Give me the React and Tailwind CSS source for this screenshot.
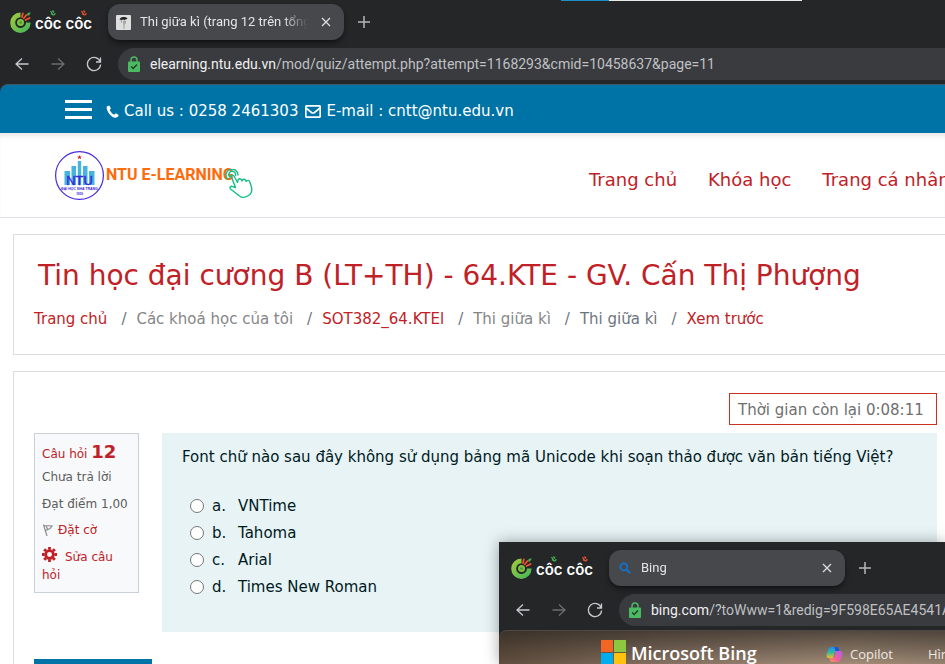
import React from "react";

function CocCocLogo() {
  return (
    <div className="flex h-full w-[85px] shrink-0 items-center gap-1">
      <svg viewBox="0 0 21 21" className="h-[21px] w-[21px] shrink-0" aria-hidden="true">
        <defs>
          <linearGradient id="ccg" x1="0" y1="0" x2="1" y2="1">
            <stop offset="0" stopColor="#a9cc3a" />
            <stop offset="1" stopColor="#3bb45c" />
          </linearGradient>
        </defs>
        <path d="M10.500 0.500 A10.200 10.200 0 1 0 20.600 10.500 H16 A5.400 5.400 0 1 1 10.500 5.200 Z" fill="url(#ccg)" />
        <circle cx="10.500" cy="10.600" r="3.500" fill="#7cc243" />
        <circle cx="10.500" cy="10.600" r="1.400" fill="#4f9440" />
        <path d="M12 5 L12.800 1.500 M13.800 6.200 L16.400 3 M15.600 8 L19.600 6" stroke="#f0512f" strokeWidth="1.800" strokeLinecap="round" />
        <path d="M17 3.500 L17.800 0.800 L20.800 0.600 L19 3.400 Z" fill="#45b654" />
      </svg>
      <span className="relative mt-1 whitespace-nowrap font-['Inter',sans-serif] text-[15px] font-semibold leading-5 text-white">
        côc côc
        <svg viewBox="0 0 60 8" className="absolute left-0 -top-1 h-2 w-[60px]" fill="none" strokeWidth="1.300" aria-hidden="true">
          <path d="M15.500 1 L17.500 4 M17.500 0.500 L19 2.500 M16 3.500 Q20 6.500 20 3" stroke="#45b654" />
          <path d="M46.500 1 L48.500 4 M48.500 0.500 L50 2.500 M47 3.500 Q51 6.500 51 3" stroke="#f0512f" />
        </svg>
      </span>
    </div>
  );
}

function ToolIcon({ label, dim, children }) {
  return (
    <button aria-label={label} className={dim ? "flex h-8 w-9 items-center justify-center text-[#6c6d6f]" : "flex h-8 w-9 items-center justify-center text-[#c8c9cb]"}>
      <svg viewBox="0 0 16 16" className="h-4 w-4" fill="none" stroke="currentColor" strokeWidth="1.300" aria-hidden="true">
        {children}
      </svg>
    </button>
  );
}

function BrowserChrome({ id, title, favicon, host, path }) {
  return (
    <header className="bg-[#242628] font-['Segoe_UI','Roboto','Noto_Sans',sans-serif]">
      <div className="flex h-11 items-center pl-[10px]">
        <CocCocLogo />
        <div className="ml-[13px] flex h-9 w-[236px] items-center rounded-xl bg-[#47484c] pl-2 pr-3 shadow-md shadow-black/40">
          <span className="flex w-6 shrink-0">{favicon}</span>
          <span className="flex-1 overflow-hidden whitespace-nowrap text-[13px] leading-5 text-[#e3e4e6] [mask-image:linear-gradient(to_right,black_85%,transparent)]">
            {title}
          </span>
          <button aria-label="Close tab" className="ml-3 text-[#dcdddf]">
            <svg viewBox="0 0 12 12" className="h-3 w-3" stroke="currentColor" strokeWidth="1.300" aria-hidden="true">
              <path d="M2 2 L10 10 M10 2 L2 10" />
            </svg>
          </button>
        </div>
        <button aria-label="New tab" className="ml-[14px] text-[#b5b6b8]">
          <svg viewBox="0 0 12 12" className="h-3 w-3" stroke="currentColor" strokeWidth="1.500" aria-hidden="true">
            <path d="M6 0 V12 M0 6 H12" />
          </svg>
        </button>
      </div>
      <div className="flex h-10 items-center pl-1">
        <ToolIcon label="Back"><path d="M14.500 8 H2 M8 2.500 L2 8 L8 13.500" /></ToolIcon>
        <ToolIcon label="Forward" dim><path d="M1.500 8 H14 M8 2.500 L14 8 L8 13.500" /></ToolIcon>
        <ToolIcon label="Reload"><path d="M14.300 6 A6.600 6.600 0 1 0 14.600 8.500 M14.500 1.500 V6 H10" /></ToolIcon>
        <div className="ml-[6px] flex h-8 min-w-0 flex-1 items-center rounded-l-full bg-[#3a3b3f] pl-[10px] text-sm leading-5">
          <svg viewBox="0 0 12 16" className="mr-[10px] h-4 w-3 shrink-0" aria-hidden="true">
            <path d="M3 7 V4 A3 3 0 0 1 9 4 V7" fill="none" stroke="#4cb963" strokeWidth="1.400" />
            <rect y="5.500" width="12" height="10.500" rx="1" fill="#4cb963" />
            <path d="M3.200 10.500 L5.200 12.600 L9 8.600" fill="none" stroke="#1f3d2a" strokeWidth="1.400" />
          </svg>
          <label htmlFor={id} className="shrink-0 text-[#eeeff1]">{host}</label>
          <input id={id} type="text" defaultValue={path} className="min-w-0 flex-1 bg-transparent text-[#bfc0c3] outline-none" />
        </div>
      </div>
    </header>
  );
}

function ContactBar() {
  return (
    <div className="flex h-[49px] items-center rounded-tl-lg border-t border-[#3f5a69] bg-[#0073a6] pl-[65px] text-[15px] leading-5 text-white">
      <button aria-label="Menu" className="flex w-[27px] flex-col gap-[5px]">
        <span className="h-[3px] bg-white" />
        <span className="h-[3px] bg-white" />
        <span className="h-[3px] bg-white" />
      </button>
      <div className="ml-[14px] flex items-center gap-[5px] whitespace-nowrap pt-1">
        <svg viewBox="0 0 13 13" className="h-[13px] w-[13px]" fill="#fff" aria-hidden="true">
          <path d="M3.300 0.400 L0.800 1.400 C-0.200 4.500 4 11.800 8.800 12.800 C10.500 13 12.500 11.800 12.700 10 L9.700 8.300 L8.200 9.700 C6.500 9 4.300 6.500 3.700 4.900 L4.900 3.500 Z" />
        </svg>
        <span>Call us : 0258 2461303</span>
        <svg viewBox="0 0 16 13" className="ml-[2px] h-[13px] w-4" fill="none" stroke="#fff" strokeWidth="1.700" aria-hidden="true">
          <rect x="0.800" y="0.800" width="14.400" height="11.400" rx="1" />
          <path d="M1 3 L7 8 H9 L15 3" />
        </svg>
        <span>E-mail : cntt@ntu.edu.vn</span>
      </div>
    </div>
  );
}

function NtuLogo() {
  return (
    <a href="#home" className="flex w-[534px] shrink-0 items-center">
      <svg viewBox="0 0 49 49" className="h-[49px] w-[49px]" aria-hidden="true">
        <circle cx="24.500" cy="24.500" r="23.900" fill="#fff" stroke="#4a2be0" strokeWidth="1.200" />
        <path d="M24.500 4 L25.200 5.500 L27 5.500 L25.600 6.600 L26.200 8.200 L24.500 7.200 L22.800 8.200 L23.400 6.600 L22 5.500 L23.800 5.500 Z" fill="#e0242a" />
        <path d="M9.500 20 H15 V34 H9.500Z M16.500 15 H21 V34 H16.500Z M22.800 10 H26.200 V34 H22.800Z M28 15 H32.500 V34 H28Z M34 20 H39.500 V34 H34Z" fill="#45b5e0" />
        <text x="24.500" y="34" textAnchor="middle" fontFamily="Liberation Sans, sans-serif" fontSize="13" stroke="#3c22dd" strokeWidth="0.300" fill="#3c22dd">NTU</text>
        <text x="24.500" y="39" textAnchor="middle" fontFamily="Liberation Sans, sans-serif" fontWeight="bold" fontSize="3.500" fill="#3c22dd">ĐẠI HỌC NHA TRANG</text>
        <text x="24.500" y="43.500" textAnchor="middle" fontFamily="Liberation Sans, sans-serif" fontWeight="bold" fontSize="3" fill="#3c22dd">1959</text>
      </svg>
      <span className="ml-[2px] whitespace-nowrap font-['Liberation_Sans_Narrow','Roboto',sans-serif] text-[16px] font-bold leading-6 text-[#ff6a0a]">
        NTU E-LEARNING
      </span>
      <svg viewBox="0 0 28 30" className="-ml-[9px] mt-[18px] h-[30px] w-7" fill="none" stroke="#16bd86" strokeWidth="1.400" strokeLinecap="round" strokeLinejoin="round" aria-hidden="true">
        <path d="M2.500 10 A6 6 0 1 1 13 6 M4.800 8 A3.400 3.400 0 1 1 10.500 6.500" />
        <path d="M6 7 Q7 5.200 9 7 L12.500 13.500 L13 11 Q14.500 9 16.500 10.500 L17 12 Q18.500 9 20.500 11 L21.200 12.500 Q23.500 10 24.800 13 L26.600 18.500 Q27.500 24 23.500 26.500 Q18 30 14.500 27 L5.500 20 Q4 17.500 7 17.300 L10.500 18.500 Z" />
      </svg>
    </a>
  );
}

function SiteHeader() {
  return (
    <div className="flex h-[85px] items-center overflow-hidden border-b border-[#dee2e6] bg-white pl-[55px] shadow-[inset_0_6px_6px_-4px_rgba(0,0,0,0.12)]">
      <NtuLogo />
      <nav className="flex gap-[31px] whitespace-nowrap pt-[10px] text-lg leading-6 text-[#c02126]">
        <a href="#home">Trang chủ</a>
        <a href="#courses">Khóa học</a>
        <a href="#me">Trang cá nhân</a>
      </nav>
    </div>
  );
}

const crumbs = [
  { text: "Trang chủ", href: "#home" },
  { text: "Các khoá học của tôi" },
  { text: "SOT382_64.KTEl", href: "#course" },
  { text: "Thi giữa kì" },
  { text: "Thi giữa kì", dark: true },
  { text: "Xem trước", href: "#preview" },
];

function CourseHeading() {
  return (
    <section className="ml-[13px] mt-4 h-[121px] border border-r-0 border-[#dcdcdc] bg-white pl-5 pt-[21px]">
      <h1 className="whitespace-nowrap pl-1 text-[28px] leading-10 text-[#c02126]">
        Tin học đại cương B (LT+TH) - 64.KTE - GV. Cấn Thị Phượng
      </h1>
      <ol className="mt-[11px] flex whitespace-nowrap text-[15px] leading-6 text-[#868686]">
        {crumbs.map((c, i) => (
          <li key={i} className="flex">
            {i > 0 && <span className="pl-[14px] pr-[10px] text-[#6c757d]">/</span>}
            {c.href ? (
              <a href={c.href} className="text-[#c02126]">{c.text}</a>
            ) : (
              <span className={c.dark ? "text-[#6c757d]" : ""}>{c.text}</span>
            )}
          </li>
        ))}
      </ol>
    </section>
  );
}

const answers = ["VNTime", "Tahoma", "Arial", "Times New Roman"];

function Quiz() {
  return (
    <section className="ml-[13px] mt-4 border border-r-0 border-[#dcdcdc] bg-white pl-5 pr-2 pt-[21px]">
      <div className="flex justify-end">
        <div className="w-52 whitespace-nowrap border border-[#ca3120] px-2 pb-[2px] pt-1 text-[15px] leading-6 text-[#6f6f6f]">
          Thời gian còn lại 0:08:11
        </div>
      </div>
      <div className="mt-2 flex items-start gap-[23px]">
        <aside className="h-40 w-[105px] shrink-0 border border-[#cad0d7] bg-[#f8f9fa] px-[7px] pt-[7px] text-xs leading-[18px] text-[#5c5c5c]">
          <h2 className="whitespace-nowrap leading-[22px] text-[#c02126]">
            Câu hỏi <strong className="text-lg leading-[22px]">12</strong>
          </h2>
          <p className="mt-[3px] whitespace-nowrap">Chưa trả lời</p>
          <p className="mt-[9px] whitespace-nowrap">Đạt điểm 1,00</p>
          <a href="#flag" className="mt-2 flex items-center gap-1 text-[#c02126]">
            <svg viewBox="0 0 12 14" className="h-[14px] w-3" fill="none" stroke="#8a8a8a" strokeWidth="1.200" aria-hidden="true">
              <path d="M1.500 1.500 L5 13 M2 2.500 L10 3 L8 5.500 L3.500 7.500 M4 2.500 L5.500 6" />
            </svg>
            Đặt cờ
          </a>
          <a href="#edit" className="mt-2 block w-20 text-[#c02126]">
            <svg viewBox="0 0 14 14" className="mr-2 inline h-[15px] w-[15px] align-[-1px]" aria-hidden="true">
              <circle cx="7" cy="7" r="3.600" fill="none" stroke="#c02126" strokeWidth="2.600" />
              <path d="M7 0 V2.500 M7 11.500 V14 M0 7 H2.500 M11.500 7 H14 M2 2 L3.800 3.800 M10.200 10.200 L12 12 M12 2 L10.200 3.800 M3.800 10.200 L2 12" stroke="#c02126" strokeWidth="2.600" />
            </svg>
            Sửa câu hỏi
          </a>
        </aside>
        <fieldset className="h-[199px] min-w-0 flex-1 bg-[#e7f3f5] pl-5 pt-3 text-[15px] leading-6 text-[#001a1e]">
          <legend className="float-left w-full whitespace-nowrap">
            Font chữ nào sau đây không sử dụng bảng mã Unicode khi soạn thảo được văn bản tiếng Việt?
          </legend>
          <div className="clear-both pl-2 pt-[23px]">
            {answers.map((a, i) => (
              <label key={a} className="flex h-[27px] items-center whitespace-nowrap">
                <input type="radio" name="answer" className="h-[14px] w-[14px] appearance-none rounded-full border border-[#767676] bg-white" />
                <span className="ml-2 w-[26px]">{"abcd"[i]}.</span>
                <span>{a}</span>
              </label>
            ))}
          </div>
        </fieldset>
      </div>
      <button aria-label="Trang trước" className="mt-[27px] block h-9 w-[118px] bg-[#0073a6]" />
    </section>
  );
}

function NtuFavicon() {
  return (
    <svg viewBox="0 0 15 15" className="h-[15px] w-[15px]" aria-hidden="true">
      <rect width="15" height="15" rx="1" fill="#dedede" />
      <path d="M3.500 4.500 Q4.500 1.500 7.500 2 Q11 1.500 11.500 4 L9.500 4.200 L9 5.500 L7.500 4.500 L5.500 5Z" fill="#222" />
      <path d="M7 5.500 L9 6 L8.500 14 L7.500 14 Z" fill="#aaa" />
      <path d="M5 5 L6 8 M9.500 6 L9 9" stroke="#888" strokeWidth="0.800" />
    </svg>
  );
}

function SearchFavicon() {
  return (
    <svg viewBox="0 0 16 16" className="ml-[2px] h-3 w-3" fill="none" stroke="#1272d0" strokeWidth="2.400" aria-hidden="true">
      <circle cx="6.500" cy="6.500" r="4.600" />
      <path d="M10 10 L15 15" />
    </svg>
  );
}

function BingPage() {
  return (
    <div className="flex h-12 items-start overflow-hidden whitespace-nowrap rounded-tl-lg border-t border-[#4b4a49] bg-[linear-gradient(180deg,rgba(38,34,30,0.65),rgba(38,34,30,0)_36px),linear-gradient(90deg,#63503f,#8d7867_40%,#a8917b_80%,#9a8673)] pl-[102px] pt-2 font-['Segoe_UI','Open_Sans',sans-serif] text-white">
      <svg viewBox="0 0 25 25" className="mt-[1px] h-[25px] w-[25px] shrink-0" aria-hidden="true">
        <path d="M0 0H12V12H0Z" fill="#f26522" />
        <path d="M13 0H25V12H13Z" fill="#8dc63f" />
        <path d="M0 13H12V25H0Z" fill="#00aeef" />
        <path d="M13 13H25V25H13Z" fill="#ffc20e" />
      </svg>
      <span className="ml-[5px] w-[126px] shrink-0 text-lg font-semibold leading-7">Microsoft Bing</span>
      <svg viewBox="0 0 17 15" className="ml-[69px] mt-2 h-[15px] w-[17px] shrink-0" aria-hidden="true">
        <defs>
          <linearGradient id="cpl" x1="0" y1="0" x2="0" y2="1">
            <stop offset="0" stopColor="#1a8fe8" />
            <stop offset="0.5" stopColor="#35b9a0" />
            <stop offset="1" stopColor="#f2c21c" />
          </linearGradient>
          <linearGradient id="cpr" x1="1" y1="0" x2="0" y2="1">
            <stop offset="0" stopColor="#b05cf0" />
            <stop offset="0.6" stopColor="#f0609a" />
            <stop offset="1" stopColor="#ff9a4a" />
          </linearGradient>
        </defs>
        <path d="M5 0 H11 Q12.500 0 13 2 L13.500 4 H11 Q9 4 8.500 6 L7 11 H3 Q0 11 0.500 7.500 L2.500 2 Q3.200 0 5 0Z" fill="url(#cpl)" />
        <path d="M8.500 0 H11 Q12.500 0 13 2 L13.500 4 H9.500Z" fill="#2050d8" />
        <path d="M12 15 H6 Q4.500 15 4 13 L3.500 11 H6 Q8 11 8.500 9 L10 4 H14 Q17 4 16.500 7.500 L14.500 13 Q13.800 15 12 15Z" fill="url(#cpr)" />
      </svg>
      <a href="#copilot" className="ml-[7px] mt-[5px] text-[13px] leading-5 text-[#efe9e3]">Copilot</a>
      <a href="#images" className="ml-[35px] mt-[5px] text-[13px] leading-5 text-[#efe9e3]">Hình ảnh</a>
    </div>
  );
}

export default function App() {
  return (
    <main className="relative h-screen overflow-hidden bg-white font-['Verdana','DejaVu_Sans',sans-serif]">
      <div className="absolute left-[561px] top-0 flex h-px w-[241px] bg-[#e8eaea]">
        <span className="w-12 bg-[#1c8fc4]" />
      </div>
      <BrowserChrome
        id="url-main"
        title="Thi giữa kì (trang 12 trên tổng số 20)"
        favicon={<NtuFavicon />}
        host="elearning.ntu.edu.vn"
        path="/mod/quiz/attempt.php?attempt=1168293&cmid=10458637&page=11"
      />
      <div className="bg-[#242628]">
        <ContactBar />
      </div>
      <SiteHeader />
      <CourseHeading />
      <Quiz />
      <div className="absolute bottom-0 left-[499px] right-0 top-[542px] overflow-hidden bg-[#242628] pt-1 shadow-[0_0_14px_rgba(0,0,0,0.35)]">
        <div className="pl-[2px]">
          <BrowserChrome
            id="url-bing"
            title="Bing"
            favicon={<SearchFavicon />}
            host="bing.com"
            path="/?toWww=1&redig=9F598E65AE4541A0B2C3"
          />
        </div>
        <BingPage />
      </div>
    </main>
  );
}
